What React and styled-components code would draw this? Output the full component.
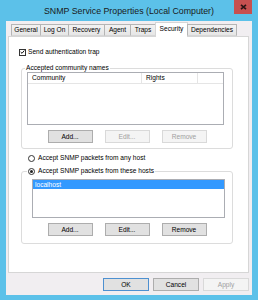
import React from "react";
import styled, { createGlobalStyle } from "styled-components";

const GlobalStyle = createGlobalStyle`
  html, body {
    margin: 0;
    padding: 0;
  }
  body {
    font-family: "Liberation Sans", Arial, sans-serif;
    font-size: 6.6px;
    color: #000;
  }
`;

const Window = styled.div`
  width: 258px;
  height: 300px;
  box-sizing: border-box;
  padding: 0 6px 5px 6px;
  background: #5cc1e9;
  display: flex;
  flex-direction: column;
`;

const TitleBar = styled.div`
  height: 21px;
  display: grid;
  grid-template-columns: 1fr auto 1fr;
  flex-shrink: 0;
`;

const Title = styled.div`
  grid-column: 2;
  font-size: 8.8px;
  line-height: 9px;
  padding-top: 7px;
  color: #1a1a1a;
  white-space: nowrap;
`;

const CloseButton = styled.div`
  grid-column: 3;
  justify-self: end;
  width: 18px;
  height: 14px;
  background: #c75050;
  display: flex;
  align-items: center;
  justify-content: center;
`;

const Body = styled.div`
  flex: 1;
  background: #f1eef1;
  padding: 1px 3px 4px 2px;
  display: flex;
  flex-direction: column;
`;

const TabStrip = styled.div`
  display: flex;
  align-items: flex-end;
  height: 14px;
  padding-left: 3px;
  position: relative;
  z-index: 1;
`;

const Tab = styled.div`
  width: ${(p) => p.$w}px;
  height: ${(p) => (p.$active ? 15 : 12)}px;
  margin-left: -1px;
  margin-bottom: ${(p) => (p.$active ? -1 : 0)}px;
  box-sizing: border-box;
  flex-shrink: 0;
  border: 1px solid ${(p) => (p.$active ? "#d6d6d6" : "#b5b5b5")};
  border-bottom: ${(p) => (p.$active ? "none" : "1px solid #d6d6d6")};
  background: ${(p) =>
    p.$active ? "#ffffff" : "linear-gradient(#f2f2f2, #e6e6e6)"};
  display: flex;
  align-items: center;
  justify-content: center;
  line-height: 8px;
  padding-bottom: ${(p) => (p.$active ? 2 : 0)}px;
  &:first-child {
    margin-left: 0;
  }
`;

const Panel = styled.div`
  flex: 1;
  background: #fff;
  border: 1px solid #d6d6d6;
  display: flex;
  flex-direction: column;
  align-items: flex-start;
`;

const CheckRow = styled.div`
  display: flex;
  align-items: center;
  gap: 2px;
  height: 8px;
  margin: 11px 0 0 10px;
  line-height: 8px;
`;

const Box = styled.span`
  width: 7px;
  height: 7px;
  box-sizing: border-box;
  border: 1px solid #333;
  background: #fff;
  display: flex;
  align-items: center;
  justify-content: center;
`;

const Group = styled.fieldset`
  width: 212px;
  box-sizing: border-box;
  margin: ${(p) => p.$top}px 0 0 12px;
  padding: 0 0 ${(p) => p.$bottom}px 0;
  border: 1px solid #dcdcdc;
  border-radius: 3px;
  min-inline-size: 0;
`;

const Legend = styled.legend`
  margin-left: ${(p) => p.$ml}px;
  padding: 0 1px;
  line-height: 8px;
  height: 8px;
`;

const LegendInner = styled.span`
  display: flex;
  align-items: center;
  gap: 3px;
`;

const ListBox = styled.div`
  width: ${(p) => p.$w}px;
  height: ${(p) => p.$h}px;
  box-sizing: border-box;
  margin: ${(p) => p.$top}px 0 0 ${(p) => p.$ml}px;
  border: 1px solid #abadb3;
  background: #fff;
`;

const ListHeader = styled.div`
  display: flex;
  height: 11px;
  box-sizing: border-box;
  border-bottom: 1px solid #e5e5e5;
`;

const HeaderCell = styled.div`
  width: ${(p) => p.$w}px;
  flex-shrink: 0;
  box-sizing: border-box;
  border-right: 1px solid #e5e5e5;
  padding-left: 4px;
  line-height: 10px;
  &:last-child {
    border-right: none;
  }
`;

const ListItem = styled.div`
  margin: 0;
  height: 9px;
  line-height: 9px;
  padding-left: 2px;
  background: ${(p) => (p.$selected ? "#3399ff" : "transparent")};
  color: ${(p) => (p.$selected ? "#fff" : "#000")};
`;

const ButtonRow = styled.div`
  display: flex;
  justify-content: center;
  gap: 12px;
  margin-top: 5px;
`;

const Button = styled.div`
  width: ${(p) => p.$w || 45}px;
  height: 13px;
  box-sizing: border-box;
  border: 1px solid
    ${(p) => (p.$disabled ? "#d9d9d9" : p.$default ? "#4d90d0" : "#adadad")};
  background: ${(p) => (p.$disabled ? "#f4f4f4" : "#e1e1e1")};
  color: ${(p) => (p.$disabled ? "#a0a0a0" : "#000")};
  display: flex;
  align-items: center;
  justify-content: center;
  line-height: 8px;
`;

const RadioRow = styled.div`
  display: flex;
  align-items: center;
  gap: 3px;
  height: 8px;
  line-height: 8px;
  margin: 5px 0 0 19px;
`;

const Radio = styled.span`
  width: 7px;
  height: 7px;
  box-sizing: border-box;
  border: 1px solid #333;
  border-radius: 50%;
  background: #fff;
  display: flex;
  align-items: center;
  justify-content: center;
  &::after {
    content: "";
    display: ${(p) => (p.$checked ? "block" : "none")};
    width: 3px;
    height: 3px;
    border-radius: 50%;
    background: #222;
  }
`;

const Footer = styled.div`
  display: flex;
  justify-content: flex-end;
  gap: 4px;
  margin-top: 5px;
`;

const tabs = [
  ["General", 30],
  ["Log On", 29],
  ["Recovery", 37],
  ["Agent", 27],
  ["Traps", 26],
  ["Security", 33, true],
  ["Dependencies", 50],
];

const Check = () => (
  <svg width="6" height="6" viewBox="0 0 6 6">
    <path d="M0.8 3 L2.4 4.6 L5.2 1.2" fill="none" stroke="#111" strokeWidth="1.2" />
  </svg>
);

const CloseX = () => (
  <svg width="7" height="6" viewBox="0 0 7 6">
    <path d="M1 0.8 L6 5.2 M6 0.8 L1 5.2" stroke="#2a1414" strokeWidth="1.6" />
  </svg>
);

const GroupButtons = ({ disabled }) => (
  <ButtonRow>
    <Button>Add...</Button>
    <Button $disabled={disabled}>Edit...</Button>
    <Button $disabled={disabled}>Remove</Button>
  </ButtonRow>
);

export default function App() {
  return (
    <>
      <GlobalStyle />
      <Window>
        <TitleBar>
          <Title>SNMP Service Properties (Local Computer)</Title>
          <CloseButton>
            <CloseX />
          </CloseButton>
        </TitleBar>
        <Body>
          <TabStrip>
            {tabs.map(([label, w, active]) => (
              <Tab key={label} $w={w} $active={active}>
                {label}
              </Tab>
            ))}
          </TabStrip>
          <Panel>
            <CheckRow>
              <Box>
                <Check />
              </Box>
              Send authentication trap
            </CheckRow>

            <Group $top={8} $bottom={5}>
              <Legend $ml={3}>Accepted community names</Legend>
              <ListBox $w={197} $h={53} $top={0} $ml={5}>
                <ListHeader>
                  <HeaderCell $w={114}>Community</HeaderCell>
                  <HeaderCell $w={56}>Rights</HeaderCell>
                  <HeaderCell $w={25} />
                </ListHeader>
              </ListBox>
              <GroupButtons disabled />
            </Group>

            <RadioRow>
              <Radio />
              Accept SNMP packets from any host
            </RadioRow>

            <Group $top={5} $bottom={7}>
              <Legend $ml={5}>
                <LegendInner>
                  <Radio $checked />
                  Accept SNMP packets from these hosts
                </LegendInner>
              </Legend>
              <ListBox $w={193} $h={39} $top={4} $ml={10}>
                <ListItem $selected>localhost</ListItem>
              </ListBox>
              <GroupButtons />
            </Group>
          </Panel>
          <Footer>
            <Button $w={46} $default>
              OK
            </Button>
            <Button $w={46}>Cancel</Button>
            <Button $w={46} $disabled>
              Apply
            </Button>
          </Footer>
        </Body>
      </Window>
    </>
  );
}
